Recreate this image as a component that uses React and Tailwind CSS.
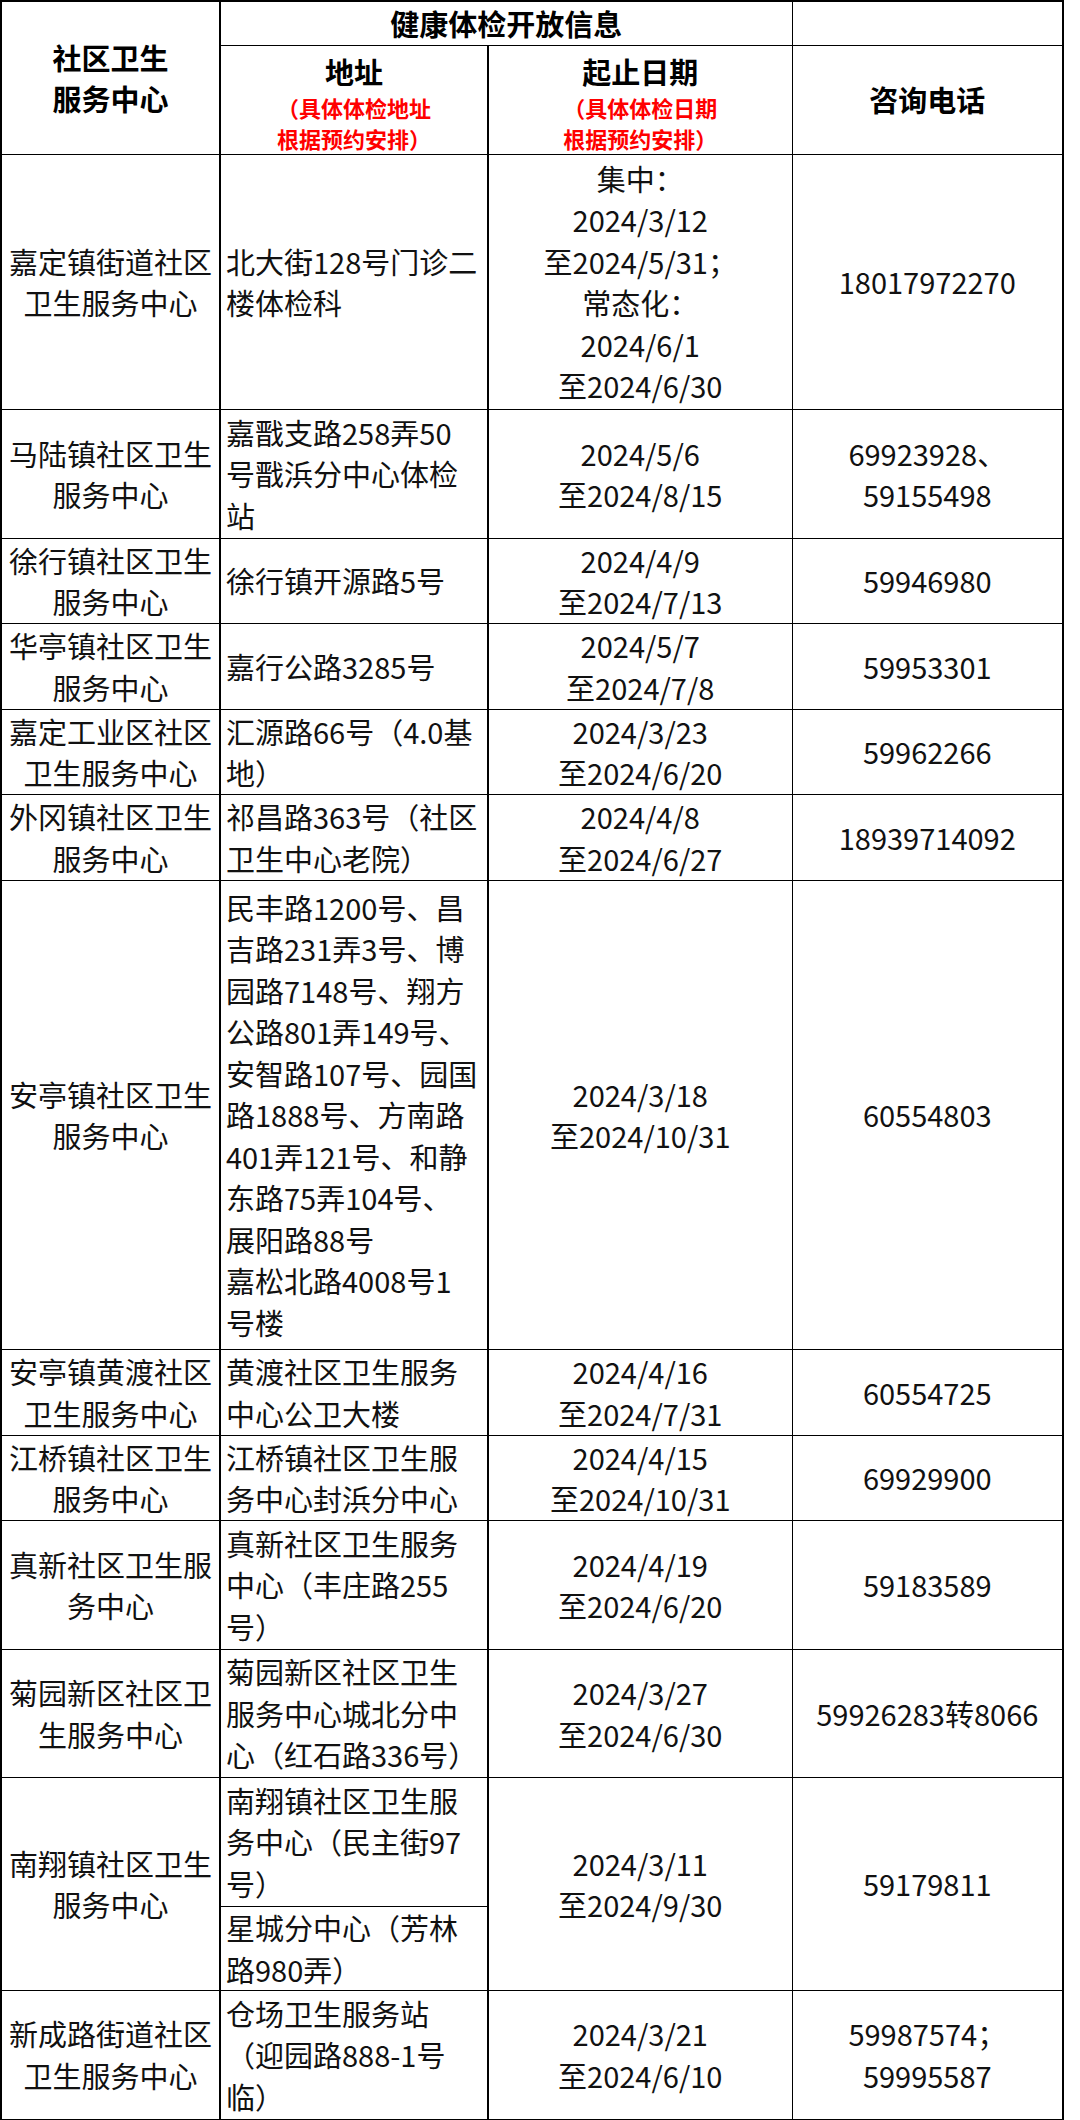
const rows = [
  {
    name: ['嘉定镇街道社区', '卫生服务中心'],
    addr: ['北大街128号门诊二', '楼体检科'],
    date: ['集中：', '2024/3/12', '至2024/5/31；', '常态化：', '2024/6/1', '至2024/6/30'],
    tel: ['18017972270'],
    h: 'h-[255px]',
  },
  {
    name: ['马陆镇社区卫生', '服务中心'],
    addr: ['嘉戬支路258弄50', '号戬浜分中心体检', '站'],
    date: ['2024/5/6', '至2024/8/15'],
    tel: ['69923928、', '59155498'],
    h: 'h-[129px]',
  },
  {
    name: ['徐行镇社区卫生', '服务中心'],
    addr: ['徐行镇开源路5号'],
    date: ['2024/4/9', '至2024/7/13'],
    tel: ['59946980'],
    h: 'h-[85px]',
  },
  {
    name: ['华亭镇社区卫生', '服务中心'],
    addr: ['嘉行公路3285号'],
    date: ['2024/5/7', '至2024/7/8'],
    tel: ['59953301'],
    h: 'h-[86px]',
  },
  {
    name: ['嘉定工业区社区', '卫生服务中心'],
    addr: ['汇源路66号（4.0基', '地）'],
    date: ['2024/3/23', '至2024/6/20'],
    tel: ['59962266'],
    h: 'h-[85px]',
  },
  {
    name: ['外冈镇社区卫生', '服务中心'],
    addr: ['祁昌路363号（社区', '卫生中心老院）'],
    date: ['2024/4/8', '至2024/6/27'],
    tel: ['18939714092'],
    h: 'h-[86px]',
  },
  {
    name: ['安亭镇社区卫生', '服务中心'],
    addr: [
      '民丰路1200号、昌',
      '吉路231弄3号、博',
      '园路7148号、翔方',
      '公路801弄149号、',
      '安智路107号、园国',
      '路1888号、方南路',
      '401弄121号、和静',
      '东路75弄104号、',
      '展阳路88号',
      '嘉松北路4008号1',
      '号楼',
    ],
    date: ['2024/3/18', '至2024/10/31'],
    tel: ['60554803'],
    h: 'h-[469px]',
  },
  {
    name: ['安亭镇黄渡社区', '卫生服务中心'],
    addr: ['黄渡社区卫生服务', '中心公卫大楼'],
    date: ['2024/4/16', '至2024/7/31'],
    tel: ['60554725'],
    h: 'h-[86px]',
  },
  {
    name: ['江桥镇社区卫生', '服务中心'],
    addr: ['江桥镇社区卫生服', '务中心封浜分中心'],
    date: ['2024/4/15', '至2024/10/31'],
    tel: ['69929900'],
    h: 'h-[85px]',
  },
  {
    name: ['真新社区卫生服', '务中心'],
    addr: ['真新社区卫生服务', '中心（丰庄路255', '号）'],
    date: ['2024/4/19', '至2024/6/20'],
    tel: ['59183589'],
    h: 'h-[129px]',
  },
  {
    name: ['菊园新区社区卫', '生服务中心'],
    addr: ['菊园新区社区卫生', '服务中心城北分中', '心（红石路336号）'],
    date: ['2024/3/27', '至2024/6/30'],
    tel: ['59926283转8066'],
    h: 'h-[128px]',
  },
];

const lastRow = {
  name: ['新成路街道社区', '卫生服务中心'],
  addr: ['仓场卫生服务站', '（迎园路888-1号', '临）'],
  date: ['2024/3/21', '至2024/6/10'],
  tel: ['59987574；', '59995587'],
  h: 'h-[129px]',
};

function Lines({ items }) {
  return items.map((t, i) => (
    <div key={i} className="whitespace-nowrap">
      {t}
    </div>
  ));
}

const cell = 'border border-black p-0 align-middle';

function DataRow({ r }) {
  return (
    <tr className={r.h}>
      <td className={`${cell} border-r-2 text-center`}>
        <Lines items={r.name} />
      </td>
      <td className={`${cell} border-r-2 pl-[5px] text-left`}>
        <Lines items={r.addr} />
      </td>
      <td className={`${cell} text-center`}>
        <Lines items={r.date} />
      </td>
      <td className={`${cell} text-center`}>
        <Lines items={r.tel} />
      </td>
    </tr>
  );
}

export default function App() {
  return (
    <div className="min-h-[2120px] w-[1080px] bg-white font-['Noto_Sans_CJK_SC',sans-serif] text-[29px] leading-[41.5px] text-[#111]">
      <table className="w-[1062px] table-fixed border-collapse border-2 border-black">
        <colgroup>
          <col className="w-[219px]" />
          <col className="w-[268px]" />
          <col className="w-[304px]" />
          <col className="w-[271px]" />
        </colgroup>
        <thead>
          <tr className="h-[44px]">
            <td rowSpan={2} className={`${cell} border-r-2 text-center font-bold text-black`}>
              <div>社区卫生</div>
              <div>服务中心</div>
            </td>
            <td colSpan={2} className={`${cell} text-center font-bold text-black`}>
              健康体检开放信息
            </td>
            <td className={cell}></td>
          </tr>
          <tr className="h-[109px]">
            <td className={`${cell} border-r-2 text-center`}>
              <div className="pt-[5px] font-bold text-black">地址</div>
              <div className="text-[22px] leading-[31px] font-bold text-[#ff0000]">
                <div>（具体体检地址</div>
                <div>根据预约安排）</div>
              </div>
            </td>
            <td className={`${cell} text-center`}>
              <div className="pt-[5px] font-bold text-black">起止日期</div>
              <div className="text-[22px] leading-[31px] font-bold text-[#ff0000]">
                <div>（具体体检日期</div>
                <div>根据预约安排）</div>
              </div>
            </td>
            <td className={`${cell} text-center font-bold text-black`}>咨询电话</td>
          </tr>
        </thead>
        <tbody>
          {rows.map((r, i) => (
            <DataRow key={i} r={r} />
          ))}
          {/* 南翔: two address blocks share one date and phone */}
          <tr className="h-[129px]">
            <td rowSpan={2} className={`${cell} border-r-2 text-center`}>
              <div>南翔镇社区卫生</div>
              <div>服务中心</div>
            </td>
            <td className={`${cell} border-r-2 pl-[5px]`}>
              <Lines items={['南翔镇社区卫生服', '务中心（民主街97', '号）']} />
            </td>
            <td rowSpan={2} className={`${cell} text-center`}>
              <div>2024/3/11</div>
              <div>至2024/9/30</div>
            </td>
            <td rowSpan={2} className={`${cell} text-center`}>
              59179811
            </td>
          </tr>
          <tr className="h-[84px]">
            <td className={`${cell} border-r-2 pl-[5px]`}>
              <Lines items={['星城分中心（芳林', '路980弄）']} />
            </td>
          </tr>
          <DataRow r={lastRow} />
        </tbody>
      </table>
    </div>
  );
}
